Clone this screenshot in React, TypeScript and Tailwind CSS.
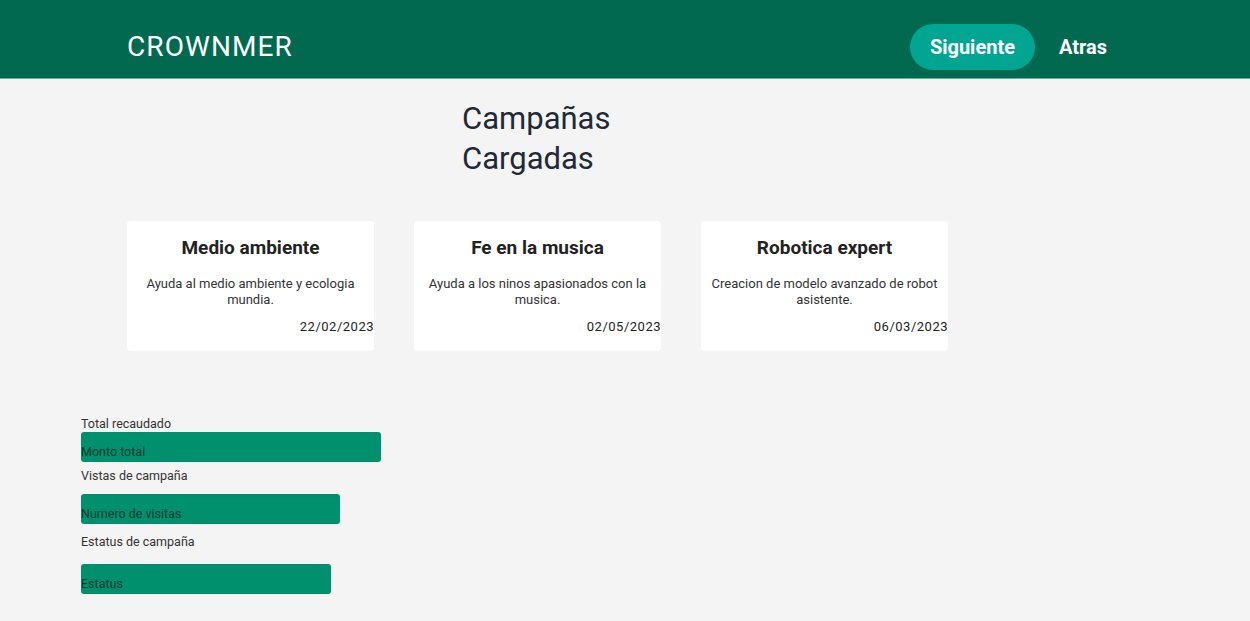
import React from "react";

const cards = [
  { title: "Medio ambiente", desc: "Ayuda al medio ambiente y ecologia mundia.", date: "22/02/2023" },
  { title: "Fe en la musica", desc: "Ayuda a los ninos apasionados con la musica.", date: "02/05/2023" },
  { title: "Robotica expert", desc: "Creacion de modelo avanzado de robot asistente.", date: "06/03/2023" },
];

export default function App() {
  return (
    <div className="min-h-[621px] bg-[#f4f4f4] font-['Roboto',sans-serif] text-[#222]">
      <header className="h-[79px] bg-[#01694f] border-b border-[#5fb39a] flex items-center justify-between pt-[16px] pl-[127px] pr-[143px]">
        <div className="text-white text-[28px] tracking-[1.1px] leading-none">CROWNMER</div>
        <nav className="flex items-center gap-[24px]">
          <button className="h-[46px] px-[20px] rounded-full bg-[#00a692] text-white font-bold text-[20px]">Siguiente</button>
          <button className="text-white font-bold text-[20px]">Atras</button>
        </nav>
      </header>

      <h1 className="ml-[462px] mt-[20px] w-[170px] text-[31px] leading-[40px] text-[#1f2937]">Campañas Cargadas</h1>

      <div className="flex gap-[40px] ml-[127px] mt-[42px]">
        {cards.map((c) => (
          <div key={c.title} className="w-[247px] h-[130px] bg-white rounded-[4px] flex flex-col items-center pt-[13px]">
            <div className="text-[19px] font-bold leading-[28px] text-[#222]">{c.title}</div>
            <p className="mt-[14px] px-[6px] text-center text-[13px] leading-[16px] text-[#333]">{c.desc}</p>
            <div className="self-end mt-[11px] text-[13px] leading-[16px] tracking-[0.5px] text-[#222]">{c.date}</div>
          </div>
        ))}
      </div>

      <div className="ml-[81px] mt-[65px] flex flex-col text-[12.5px] text-[#333]">
        <div className="leading-[16px]">Total recaudado</div>
        <div className="w-[300px] h-[30px] bg-[#00906e] rounded-[3px] flex items-end leading-[16px] pb-[2px] text-[#0d3b2e]">Monto total</div>
        <div className="mt-[6px] leading-[16px]">Vistas de campaña</div>
        <div className="mt-[10px] w-[259px] h-[30px] bg-[#00906e] rounded-[3px] flex items-end leading-[16px] pb-[2px] text-[#0d3b2e]">Numero de visitas</div>
        <div className="mt-[10px] leading-[16px]">Estatus de campaña</div>
        <div className="mt-[14px] w-[250px] h-[30px] bg-[#00906e] rounded-[3px] flex items-end leading-[16px] pb-[2px] text-[#0d3b2e]">Estatus</div>
      </div>
    </div>
  );
}
